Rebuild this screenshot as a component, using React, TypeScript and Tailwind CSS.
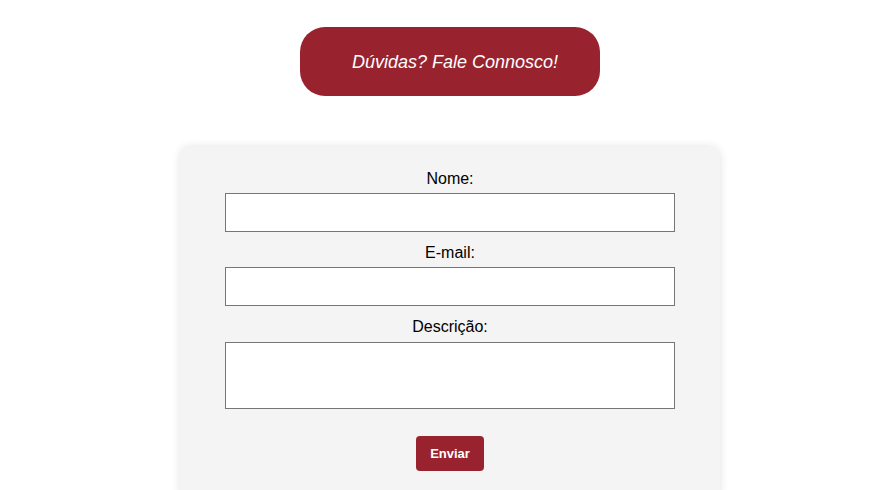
export default function App() {
  return (
    <div className="min-h-[490px] bg-white flex flex-col items-center pl-[5px]" style={{ fontFamily: '"Liberation Sans", Arial, sans-serif' }}>
      <div className="mt-[27px] w-[300px] h-[69px] rounded-[25px] bg-[#98232f] flex items-center pl-[52px]">
        <span className="text-white italic text-[18px] leading-none">Dúvidas? Fale Connosco!</span>
      </div>
      <form className="mt-[51px] w-[540px] bg-[#f4f4f4] rounded-[10px] shadow-[0_0_10px_rgba(0,0,0,0.12)] pt-[23px] pb-[30px] flex flex-col items-center" onSubmit={(e) => e.preventDefault()}>
        <label className="block text-[16px] leading-[18px] text-black text-center">Nome:</label>
        <input type="text" className="mt-[5px] w-[450px] h-[39px] border border-[#767676] bg-white px-2 outline-none" />
        <label className="mt-[12px] block text-[16px] leading-[18px] text-black text-center">E-mail:</label>
        <input type="email" className="mt-[5px] w-[450px] h-[39px] border border-[#767676] bg-white px-2 outline-none" />
        <label className="mt-[12px] block text-[16px] leading-[18px] text-black text-center">Descrição:</label>
        <textarea className="mt-[6px] w-[450px] h-[67px] border border-[#767676] bg-white p-2 outline-none resize-none block" />
        <button type="submit" className="mt-[27px] w-[68px] h-[35px] rounded-[4px] bg-[#98232f] text-white text-[13px] font-bold">Enviar</button>
      </form>
    </div>
  );
}
